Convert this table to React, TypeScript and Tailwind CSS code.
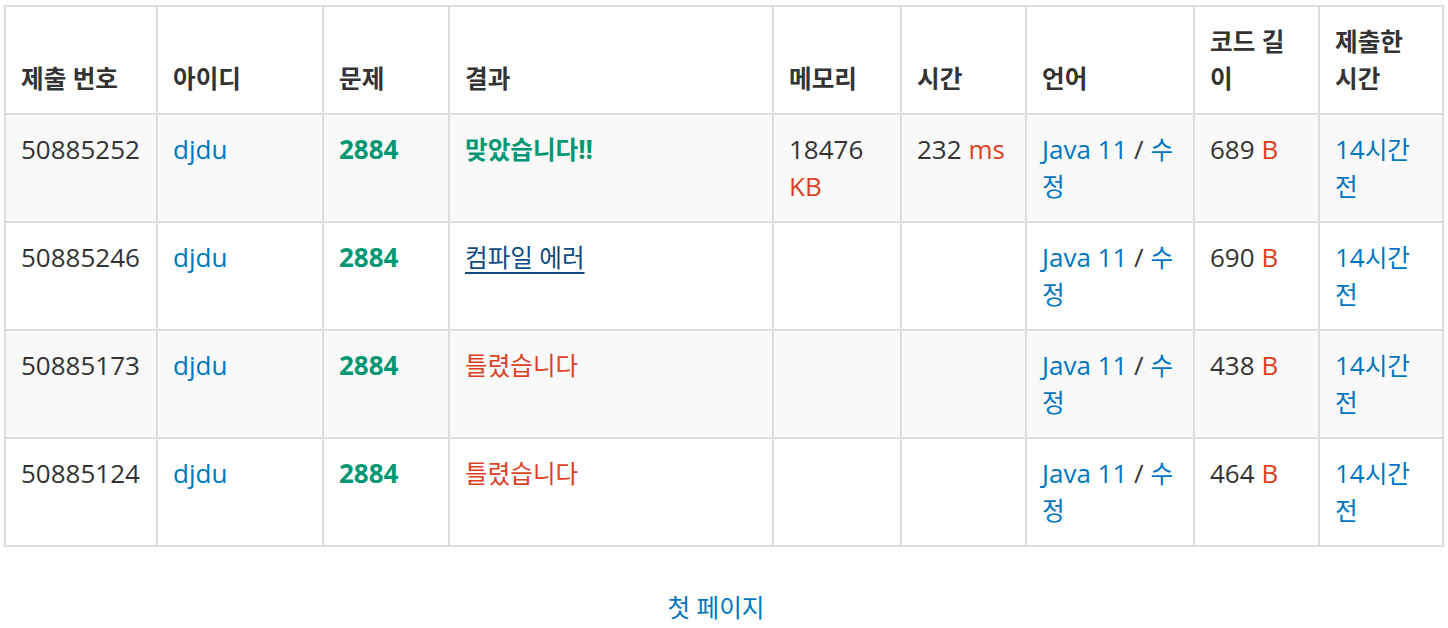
import React from 'react'

type Row = {
  id: string
  user: string
  problem: string
  result: 'ac' | 'ce' | 'wa'
  memory?: string
  time?: string
  length: string
}

const ROWS: Row[] = [
  { id: '50885252', user: 'djdu', problem: '2884', result: 'ac', memory: '18476', time: '232', length: '689' },
  { id: '50885246', user: 'djdu', problem: '2884', result: 'ce', length: '690' },
  { id: '50885173', user: 'djdu', problem: '2884', result: 'wa', length: '438' },
  { id: '50885124', user: 'djdu', problem: '2884', result: 'wa', length: '464' },
]

const HEADERS = ['제출 번호', '아이디', '문제', '결과', '메모리', '시간', '언어', '코드 길이', '제출한 시간']
const WIDTHS = ['w-[152px]', 'w-[166px]', 'w-[126px]', 'w-[324px]', 'w-[128px]', 'w-[125px]', 'w-[168px]', 'w-[125px]', 'w-[124px]']

const cell = 'border-2 border-[#dddddd] pl-[15px] pr-[13px] py-4 align-top'

// hangul renders a touch larger than the reference's system font, so shrink it a bit
function K({ children, className = '' }: { children: React.ReactNode; className?: string }) {
  return <span className={`text-[24.6px] ${className}`}>{children}</span>
}

function Result({ kind }: { kind: Row['result'] }) {
  if (kind === 'ac')
    return (
      <span className="font-bold text-[#009874]">
        <K>맞았습니다</K>!!
      </span>
    )
  if (kind === 'ce')
    return (
      <span className="text-[#0f4c81] underline underline-offset-[5px]">
        <K>컴파일 에러</K>
      </span>
    )
  return (
    <span className="text-[#dd4124]">
      <K>틀렸습니다</K>
    </span>
  )
}

export default function App() {
  return (
    <div
      className="min-h-screen bg-white px-[4px] pt-[5px] text-[26px] leading-[37px] text-[#333333]"
      style={{ fontFamily: '"Open Sans", "Noto Sans CJK KR", sans-serif' }}
    >
      <table className="w-[1438px] table-fixed border-collapse">
        <colgroup>
          {WIDTHS.map((w, i) => (
            <col key={i} className={w} />
          ))}
        </colgroup>
        <thead>
          <tr>
            {HEADERS.map((h) => (
              <th key={h} className="border-2 border-[#dddddd] pl-[15px] pr-[13px] py-4 text-left align-bottom font-bold">
                <K>{h}</K>
              </th>
            ))}
          </tr>
        </thead>
        <tbody>
          {ROWS.map((r, i) => (
            <tr key={r.id} className={i % 2 === 0 ? 'bg-[#f9f9f9]' : 'bg-white'}>
              <td className={cell}>{r.id}</td>
              <td className={cell}>
                <span className="text-[#0076c0]">{r.user}</span>
              </td>
              <td className={cell}>
                <span className="font-bold text-[#009874]">{r.problem}</span>
              </td>
              <td className={cell}>
                <Result kind={r.result} />
              </td>
              <td className={cell}>
                {r.memory && (
                  <>
                    {r.memory} <span className="text-[#dd4124]">KB</span>
                  </>
                )}
              </td>
              <td className={cell}>
                {r.time && (
                  <>
                    {r.time} <span className="text-[#dd4124]">ms</span>
                  </>
                )}
              </td>
              <td className={cell}>
                <span className="text-[#0076c0]">Java 11</span> /{' '}
                <K className="text-[#0076c0]">수정</K>
              </td>
              <td className={cell}>
                {r.length} <span className="text-[#dd4124]">B</span>
              </td>
              <td className={cell}>
                <span className="text-[#0076c0]">
                  14<K>시간 전</K>
                </span>
              </td>
            </tr>
          ))}
        </tbody>
      </table>

      <div className="mt-[42px] flex justify-center pr-4">
        <K className="text-[#0076c0]">첫 페이지</K>
      </div>
    </div>
  )
}
